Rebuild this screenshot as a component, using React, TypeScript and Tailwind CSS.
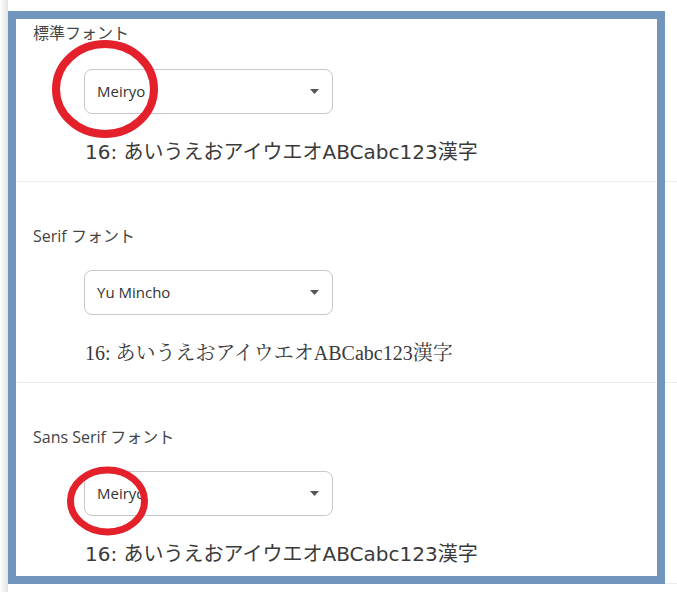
const uiFont = { fontFamily: '"Open Sans", "Noto Sans CJK JP", sans-serif' };

type Section = {
  label: string;
  value: string;
  sampleFont: string;
};

const sections: Section[] = [
  { label: "標準フォント", value: "Meiryo", sampleFont: '"DejaVu Sans", "Noto Sans CJK JP", sans-serif' },
  { label: "Serif フォント", value: "Yu Mincho", sampleFont: '"Liberation Serif", "Noto Serif CJK JP", "Noto Sans CJK JP", serif' },
  { label: "Sans Serif フォント", value: "Meiryo", sampleFont: '"DejaVu Sans", "Noto Sans CJK JP", sans-serif' },
];

function FontSelect({ value }: { value: string }) {
  return (
    <div className="ml-[76px] flex h-[45px] w-[249px] items-center justify-between rounded-lg border border-[#c8c8c8] bg-white pl-3 pr-[13px]">
      <span className="text-[15px] text-[#333]" style={uiFont}>
        {value}
      </span>
      <svg width="9" height="5" viewBox="0 0 9 5">
        <path d="M0 0h9L4.5 5z" fill="#555" />
      </svg>
    </div>
  );
}

function FontSection({ s, first }: { s: Section; first: boolean }) {
  return (
    <div
      className={`flex flex-col border-b border-[#ececec] ${
        first ? "h-[182px] pt-[22px]" : "h-[201px] pt-[43px]"
      }`}
    >
      <div className="ml-[25px] h-[22px] text-[16px] leading-[22px] text-[#444]" style={uiFont}>
        {s.label}
      </div>
      <div className={first ? "mt-[25px]" : "mt-[23px]"}>
        <FontSelect value={s.value} />
      </div>
      <div
        className="ml-[77px] mt-[24px] h-[28px] text-[20px] leading-[28px] text-[#3a3a3a]"
        style={{ fontFamily: s.sampleFont }}
      >
        16: あいうえおアイウエオABCabc123漢字
      </div>
    </div>
  );
}

export default function App() {
  return (
    <div className="relative flex h-[592px] w-full overflow-hidden bg-white">
      <div className="h-full w-2 bg-gradient-to-r from-white to-[#e2e2e2]" />
      <div className="flex flex-1 flex-col">
        {sections.map((s, i) => (
          <FontSection key={i} s={s} first={i === 0} />
        ))}
      </div>

      {/* annotation frame */}
      <div className="pointer-events-none absolute left-2 top-[11px] h-[573px] w-[657px] border-8 border-[#7295be]" />

      {/* red circles */}
      <svg className="pointer-events-none absolute left-0 top-0" width="677" height="592">
        <ellipse cx="105" cy="89" rx="49" ry="45" fill="none" stroke="#e4202a" strokeWidth="8" />
        <ellipse cx="107.5" cy="501" rx="37" ry="31" fill="none" stroke="#e4202a" strokeWidth="7" />
      </svg>
    </div>
  );
}
